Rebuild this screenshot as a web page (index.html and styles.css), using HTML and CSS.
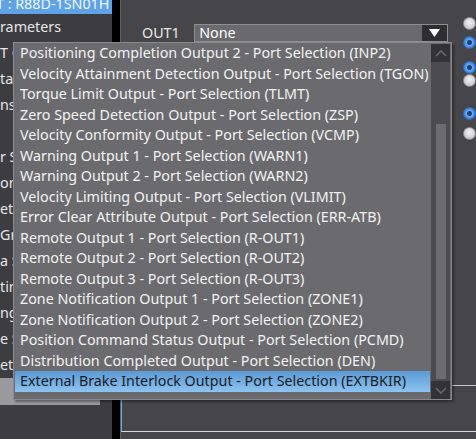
FILE: index.html
```html
<!DOCTYPE html>
<html lang="en">
<head>
  <meta charset="UTF-8" />
  <title>Servo Parameters</title>
  <link rel="stylesheet" href="styles.css">
</head>
<body>
  <div class="app">
    <div class="tree">
      <div class="tree-head">T : R88D-1SN01H</div>
      <div class="tree-row">rameters</div>
      <div class="tree-row">T Objects</div>
      <div class="tree-row">ta Settings</div>
      <div class="tree-row">ns Settings</div>
      <div class="tree-row"></div>
      <div class="tree-row">r Settings</div>
      <div class="tree-row">on Settings</div>
      <div class="tree-row">etting</div>
      <div class="tree-row">Group</div>
      <div class="tree-row">a Settings</div>
      <div class="tree-row">ting</div>
      <div class="tree-row">ng Output</div>
      <div class="tree-row">e Settings</div>
      <div class="tree-row">et Settings</div>
      <div class="tree-foot"></div>
    </div>

    <div class="splitter"></div>

    <div class="main">
      <div class="out-row">
        <span class="out-label">OUT1</span>
        <div class="combo">
          <span class="combo-value">None</span>
          <span class="combo-btn">
            <svg width="11" height="8" viewBox="0 0 11 8"><path d="M0 0 H11 L5.5 8 Z" fill="#fff"/></svg>
          </span>
        </div>
        <div class="radios">
          <span class="radio"></span>
          <span class="radio on r2"></span>
          <span class="radio on r3"></span>
          <span class="radio r4"></span>
          <span class="radio on r5"></span>
          <span class="radio r6"></span>
        </div>
      </div>
      <div class="frame"></div>
    </div>
  </div>

  <!-- open combo popup -->
  <div class="popup">
    <ul class="options">
      <li>Positioning Completion Output 2 - Port Selection (INP2)</li>
      <li>Velocity Attainment Detection Output - Port Selection (TGON)</li>
      <li>Torque Limit Output - Port Selection (TLMT)</li>
      <li>Zero Speed Detection Output - Port Selection (ZSP)</li>
      <li>Velocity Conformity Output - Port Selection (VCMP)</li>
      <li>Warning Output 1 - Port Selection (WARN1)</li>
      <li>Warning Output 2 - Port Selection (WARN2)</li>
      <li>Velocity Limiting Output - Port Selection (VLIMIT)</li>
      <li>Error Clear Attribute Output - Port Selection (ERR-ATB)</li>
      <li>Remote Output 1 - Port Selection (R-OUT1)</li>
      <li>Remote Output 2 - Port Selection (R-OUT2)</li>
      <li>Remote Output 3 - Port Selection (R-OUT3)</li>
      <li>Zone Notification Output 1 - Port Selection (ZONE1)</li>
      <li>Zone Notification Output 2 - Port Selection (ZONE2)</li>
      <li>Position Command Status Output - Port Selection (PCMD)</li>
      <li>Distribution Completed Output - Port Selection (DEN)</li>
      <li class="selected">External Brake Interlock Output - Port Selection (EXTBKIR)</li>
    </ul>
    <div class="scrollbar">
      <span class="sb-btn">
        <svg width="12" height="7" viewBox="0 0 12 7"><path d="M1 6 L6 1 L11 6" fill="none" stroke="#6a6a6e" stroke-width="1.5"/></svg>
      </span>
      <span class="sb-track"><span class="sb-thumb"></span></span>
      <span class="sb-btn">
        <svg width="12" height="7" viewBox="0 0 12 7"><path d="M1 1 L6 6 L11 1" fill="none" stroke="#6a6a6e" stroke-width="1.5"/></svg>
      </span>
    </div>
  </div>
</body>
</html>
```

FILE: styles.css
```css
body {
  margin: 0;
  padding: 0;
  width: 476px;
  height: 439px;
  overflow: hidden;
  background-color: #46464a;
  font-family: 'Noto Sans', 'Open Sans', sans-serif;
  color: #e6e6e6;
}

.app {
  display: grid;
  grid-template-columns: 112px 8px 1fr;
  height: 439px;
}

/* left tree */
.tree {
  background-color: #3d3d41;
  overflow: hidden;
  white-space: nowrap;
  font-size: 14.3px;
  display: flex;
  flex-direction: column;
}

.tree-head {
  height: 14px;
  flex-shrink: 0;
  line-height: 8px;
  background-color: #5ea2e8;
  color: #f4f8ff;
  text-indent: -4px;
  overflow: hidden;
}

.tree-row {
  height: 26px;
  line-height: 26px;
  flex-shrink: 0;
}

.tree-foot {
  height: 27px;
  flex-shrink: 0;
  width: 100px;
  background-color: #9a9a9e;
}

.splitter {
  background-color: #000;
}

/* main panel */
.main {
  border-left: 1px solid #5c5c61;
  padding: 24px 0 7px 0;
  display: flex;
  flex-direction: column;
  min-width: 0;
}

.out-row {
  display: flex;
  align-items: flex-start;
}

.out-label {
  width: 74px;
  padding-left: 21px;
  box-sizing: border-box;
  font-size: 14.3px;
  line-height: 18px;
}

.combo {
  width: 258px;
  height: 18px;
  box-sizing: border-box;
  border: 1px solid #8e8e92;
  background-color: #6a6a6e;
  display: flex;
  align-items: center;
  justify-content: space-between;
}

.combo-value {
  padding-left: 4px;
  font-size: 14.3px;
  line-height: 16px;
  color: #fff;
}

.combo-btn {
  width: 25px;
  height: 16px;
  background-color: #2e2e32;
  display: flex;
  align-items: center;
  justify-content: center;
}

.radios {
  margin-left: 15px;
  margin-top: -7px;
  display: flex;
  flex-direction: column;
}

.radio {
  width: 13px;
  height: 13px;
  flex-shrink: 0;
  border-radius: 50%;
  box-sizing: border-box;
  border: 1px solid #909094;
  background: radial-gradient(circle at 50% 40%, #f4f4f4, #b8b8bc);
}

.radio.on {
  border-color: #2f6fc0;
  background: radial-gradient(circle, #1e3f78 0 2px, #6aaaf4 3px, #2f78d8 6px);
}

.radio.r2 { margin-top: 6px; }
.radio.r3 { margin-top: 12px; }
.radio.r4 { margin-top: 0; }
.radio.r5 { margin-top: 20px; }
.radio.r6 { margin-top: 7px; }

.frame {
  margin-top: auto;
  height: 47px;
  box-sizing: border-box;
  border-top: 1px solid #c8c8c4;
  border-left: 1px solid #6aa8f0;
  border-bottom: 1px solid #d8d8d8;
}

/* popup list */
.popup {
  position: absolute;
  left: 13px;
  top: 42px;
  width: 439px;
  height: 358px;
  box-sizing: border-box;
  border: 1px solid #8a8a8e;
  background-color: #6b6b6f;
  box-shadow: 2px 2px 2px rgba(0,0,0,0.35);
  display: flex;
}

.options {
  list-style: none;
  margin: 0;
  padding: 0 1px;
  flex: 1;
  min-width: 0;
}

.options li {
  height: 20.5px;
  line-height: 20.5px;
  padding-left: 5px;
  font-size: 14.3px;
  color: #f2f2f2;
  white-space: nowrap;
}

.options li.selected {
  background: linear-gradient(#5b9ad6, #8cc3ef);
  color: #1c1c1c;
}

.scrollbar {
  width: 19px;
  margin: 1px 1px 0 0;
  background-color: #4c4c50;
  display: flex;
  flex-direction: column;
}

.sb-btn {
  height: 18px;
  background-color: #333337;
  display: flex;
  align-items: center;
  justify-content: center;
}

.sb-track {
  flex: 1;
  padding: 62px 4px 2px 5px;
  display: flex;
}

.sb-thumb {
  flex: 1;
  background-color: #6c6c70;
}
```
